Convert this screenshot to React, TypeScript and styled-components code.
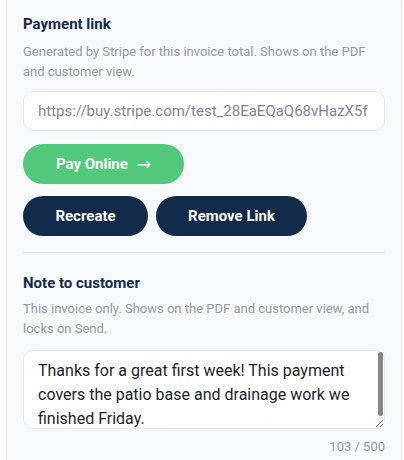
import React from "react";
import styled, { createGlobalStyle } from "styled-components";

const Global = createGlobalStyle`
  html, body { margin: 0; padding: 0; background: #ffffff; }
  body { font-family: "Roboto", "Open Sans", "Liberation Sans", sans-serif; }
  * { box-sizing: border-box; }
`;

const Panel = styled.div`
  margin: -10px 2px 0 6px;
  padding: 23px 16px 6px 16px;
  background: #f8f9fb;
  border: 1px solid #e5e7eb;
  border-bottom: none;
  border-radius: 12px 12px 0 0;
  display: flex;
  flex-direction: column;
`;

const Section = styled.section`
  display: flex;
  flex-direction: column;
`;

const Title = styled.h3`
  margin: 0;
  font-size: 15px;
  line-height: 20px;
  font-weight: 700;
  color: #132a4a;
`;

const Hint = styled.p<{ $gap?: number }>`
  margin: ${(p) => p.$gap ?? 8}px 0 0 0;
  font-size: 13px;
  line-height: 19.5px;
  color: #929ba6;
`;

const LinkField = styled.input`
  margin-top: 10px;
  height: 40px;
  width: 100%;
  padding: 0 14px;
  border: 1px solid #e4e7ec;
  border-radius: 10px;
  background: #ffffff;
  font-family: inherit;
  font-size: 15px;
  color: #7b8794;
  outline: none;
`;

const Buttons = styled.div`
  margin-top: 13px;
  display: flex;
  flex-direction: column;
  align-items: flex-start;
  gap: 12px;
`;

const Row = styled.div`
  display: flex;
  gap: 8px;
`;

const Pill = styled.button<{ $tone: "green" | "navy"; $w: number }>`
  height: 40px;
  width: ${(p) => p.$w}px;
  border: none;
  border-radius: 20px;
  background: ${(p) => (p.$tone === "green" ? "#52c97a" : "#132b4a")};
  color: #ffffff;
  font-family: inherit;
  font-size: 15px;
  font-weight: 700;
  display: flex;
  align-items: center;
  justify-content: center;
  gap: 9px;
  cursor: pointer;
`;

const Arrow = styled.span`
  font-family: "DejaVu Sans", sans-serif;
  font-weight: 400;
  font-size: 17px;
  line-height: 1;
`;

const Divider = styled.hr`
  margin: 16px 0 20px 0;
  border: none;
  border-top: 1px solid #e5e7eb;
`;

const NoteBox = styled.div`
  position: relative;
  margin-top: 12px;
  display: flex;
`;

const Note = styled.textarea`
  height: 79px;
  width: 100%;
  padding: 8px 14px;
  border: 1px solid #e4e7ec;
  border-radius: 10px;
  background: #ffffff;
  font-family: inherit;
  font-size: 16px;
  line-height: 24px;
  color: #1b1f26;
  resize: vertical;
  outline: none;
  overflow-y: auto;
`;

const ScrollThumb = styled.div`
  position: absolute;
  top: 2px;
  right: 2px;
  width: 5px;
  height: 64px;
  border-radius: 3px;
  background: #878787;
  pointer-events: none;
`;

const Counter = styled.div`
  margin-top: 9px;
  text-align: right;
  font-size: 13px;
  line-height: 18px;
  color: #929ba6;
`;

export default function App() {
  return (
    <>
      <Global />
      <Panel>
        <Section>
          <Title>Payment link</Title>
          <Hint>Generated by Stripe for this invoice total. Shows on the PDF and customer view.</Hint>
          <LinkField readOnly value="https://buy.stripe.com/test_28EaEQaQ68vHazX5f" />
          <Buttons>
            <Pill $tone="green" $w={161}>
              Pay Online <Arrow>→</Arrow>
            </Pill>
            <Row>
              <Pill $tone="navy" $w={125}>Recreate</Pill>
              <Pill $tone="navy" $w={151}>Remove Link</Pill>
            </Row>
          </Buttons>
        </Section>
        <Divider />
        <Section>
          <Title>Note to customer</Title>
          <Hint $gap={6}>This invoice only. Shows on the PDF and customer view, and locks on Send.</Hint>
          <NoteBox>
            <Note defaultValue="Thanks for a great first week! This payment covers the patio base and drainage work we finished Friday." />
            <ScrollThumb />
          </NoteBox>
          <Counter>103 / 500</Counter>
        </Section>
      </Panel>
    </>
  );
}
